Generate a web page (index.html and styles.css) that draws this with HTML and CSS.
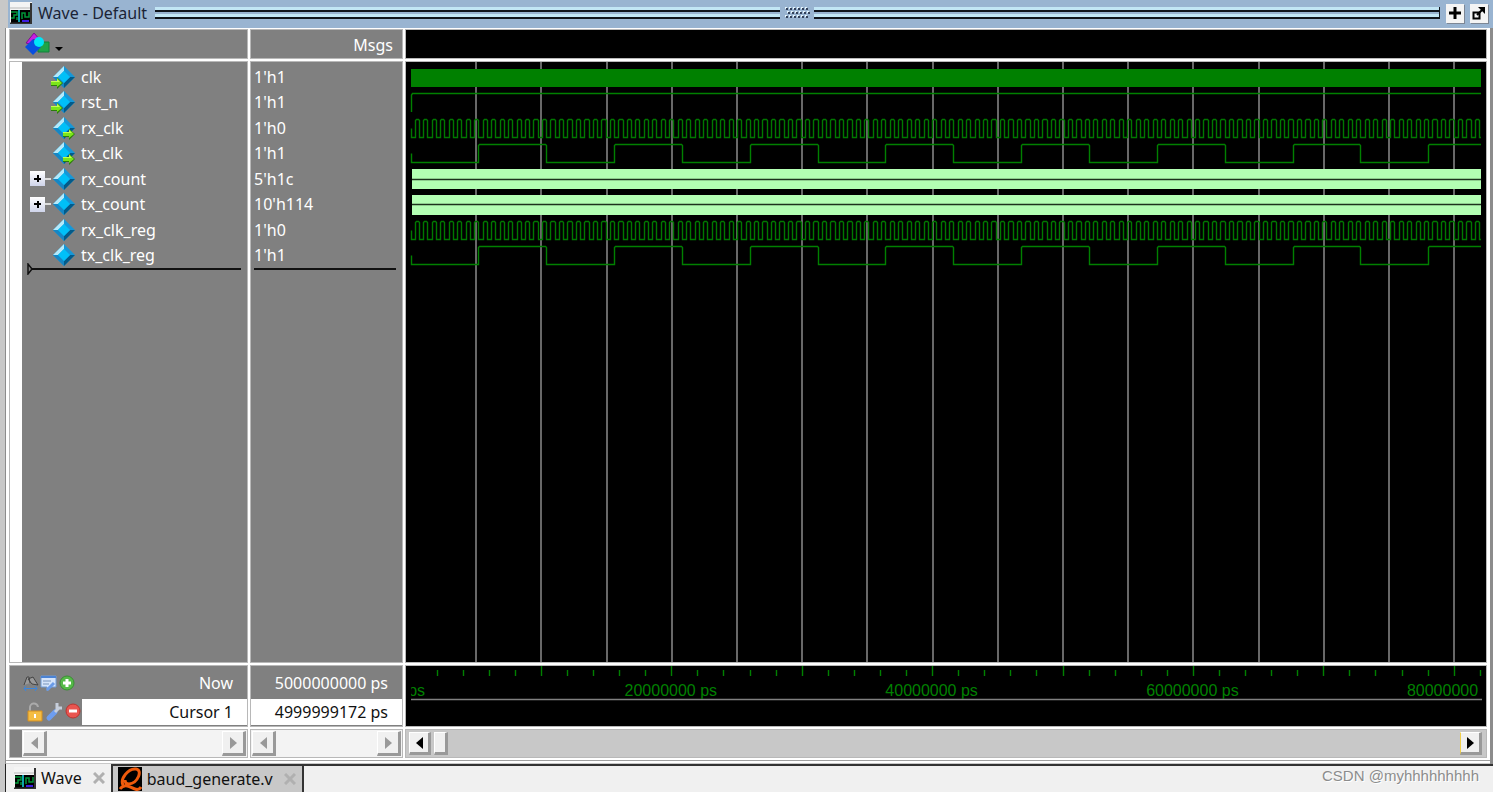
FILE: index.html
```html
<!DOCTYPE html>
<html lang="en">
<head>
<meta charset="utf-8">
<title>Wave - Default</title>
<link rel="stylesheet" href="styles.css">
</head>
<body>
<svg class="defs" aria-hidden="true">
  <defs>
    <symbol id="gem" viewBox="0 0 24 24">
      <path d="M13 1L24 12L13 23L2 12Z" fill="#1597d8"/>
      <path d="M13 1V6L7 12H2Z" fill="#b4e9fa"/>
      <path d="M2 12H7L13 18V23Z" fill="#1686c4"/>
      <path d="M13 23V18L19 12H24Z" fill="#045a88"/>
      <path d="M13 6L19 12L13 18L7 12Z" fill="#00c0f8"/>
    </symbol>
    <symbol id="arrow" viewBox="0 0 12 12">
      <path d="M0 4H6V1L12 6L6 12V9H0Z" fill="#2b7d0b"/>
      <path d="M0 4H6V1L11 6L6 10V8H0Z" fill="#7be51b"/>
      <path d="M0 4H6V2L9 5H0Z" fill="#c4ff4f"/>
    </symbol>
    <symbol id="wave" viewBox="0 0 22 22">
      <path d="M0 0H22V22H0Z" fill="#f4f4f4"/>
      <path d="M0 6H20" stroke="#b8b8b8"/>
      <path d="M1 8H20V21H1Z" fill="#000"/>
      <path d="M21 1V22M0 21.500H22" stroke="#333" stroke-width="2"/>
      <path d="M1 10H7V13H4V16H1M7 18V15M12 17V11H15V15H19V10" fill="none" stroke="#009638" stroke-width="1.500"/>
      <path d="M9 8V20" stroke="#16d8e8" stroke-width="1.500"/>
      <path d="M12 19H19" stroke="#3c1ce0" stroke-width="2"/>
    </symbol>
    <symbol id="close" viewBox="0 0 12 12">
      <path d="M1 1L11 11M11 1L1 11" stroke="#b0b0b0" stroke-width="3"/>
    </symbol>
  </defs>
</svg>
<div class="window">
  <header class="titlebar">
    <svg class="wave-icon"><use href="#wave"/></svg>
    <h1 class="title">Wave - Default</h1>
    <span class="grip"></span>
    <svg class="dots" id="dots"></svg>
    <span class="grip grip-end"></span>
    <button class="tool" aria-label="Zoom pane"><svg width="18" height="18"><path d="M9 3V15M3 9H15" stroke="#000" stroke-width="3"/></svg></button>
    <button class="tool" aria-label="Undock"><svg width="18" height="18"><path d="M3.500 8.500H9.500V14.500H3.500Z" fill="none" stroke="#000" stroke-width="2"/><path d="M7 11L13 5" stroke="#000" stroke-width="2"/><path d="M8 3H15V10Z"/></svg></button>
  </header>

  <main class="panes">
    <div class="cell head">
      <button class="filter" aria-label="Signal filter">
        <svg width="42" height="28" viewBox="0 0 42 28">
          <path d="M13 12H24V22H13Z" fill="#1fa548" stroke="#12803a"/>
          <path d="M1 13L9 3L16 11L12 14L9 9L5 14Z" fill="#c51fe0" stroke="#7b128e"/>
          <path d="M8 9L16 17L8 25L0 17Z" fill="#084fe0"/>
          <circle cx="14" cy="12" r="5" fill="#00e5f8"/>
          <path d="M30 17H38L34 21Z"/>
        </svg>
      </button>
    </div>
    <div class="cell head msgs">Msgs</div>
    <div class="cell head black"></div>

    <div class="cell names">
      <ul class="rows">
        <li><span class="stub"></span><svg class="gem"><use href="#gem"/><use href="#arrow" x="0" y="12" width="12" height="12"/></svg>clk</li>
        <li><span class="stub"></span><svg class="gem"><use href="#gem"/><use href="#arrow" x="0" y="12" width="12" height="12"/></svg>rst_n</li>
        <li><span class="stub"></span><svg class="gem"><use href="#gem"/><use href="#arrow" x="12" y="12" width="12" height="12"/></svg>rx_clk</li>
        <li><span class="stub"></span><svg class="gem"><use href="#gem"/><use href="#arrow" x="12" y="12" width="12" height="12"/></svg>tx_clk</li>
        <li><span class="stub branch"><button class="expand" aria-label="Expand rx_count"></button></span><svg class="gem"><use href="#gem"/></svg>rx_count</li>
        <li><span class="stub branch"><button class="expand" aria-label="Expand tx_count"></button></span><svg class="gem"><use href="#gem"/></svg>tx_count</li>
        <li><span class="stub"></span><svg class="gem"><use href="#gem"/></svg>rx_clk_reg</li>
        <li><span class="stub"></span><svg class="gem"><use href="#gem"/></svg>tx_clk_reg</li>
      </ul>
      <div class="insert"><svg width="6" height="12"><path d="M1 1V11L5 6Z" fill="none" stroke="#111" stroke-width="1.500"/></svg></div>
    </div>
    <div class="cell values">
      <ul class="rows">
        <li>1'h1</li><li>1'h1</li><li>1'h0</li><li>1'h1</li>
        <li>5'h1c</li><li>10'h114</li><li>1'h0</li><li>1'h1</li>
      </ul>
      <div class="insert"></div>
    </div>
    <div class="cell black plot"><svg id="plot" role="img" aria-label="Signal waveforms"></svg></div>

    <div class="cell cursors">
      <div class="line now">
        <svg width="52" height="18" viewBox="0 0 52 18">
          <path d="M1 11L4 3H6L7 9M5 5L10 3L15 11L9 10Z" fill="#999" stroke="#444"/>
          <path d="M1 14.500H14M3 12L1 14.500L3 17M12 12L14 14.500L12 17" fill="none" stroke="#3c86dc"/>
          <path d="M18 2H33V13H28L24 17V13H18Z" fill="#d5e4fa" stroke="#719bd6"/>
          <path d="M18 3H33" stroke="#4b83d4" stroke-width="2"/>
          <path d="M20 7H28M20 10H26" stroke="#7894bc"/><path d="M24 16L31 9" stroke="#6a9be8" stroke-width="3"/>
          <circle cx="44" cy="9" r="7" fill="#55ba48" stroke="#3b8d35"/>
          <path d="M44 5V13M40 9H48" stroke="#fff" stroke-width="3"/>
        </svg>
        <span class="label">Now</span>
      </div>
      <div class="line cursor">
        <svg width="60" height="24" viewBox="0 0 60 24">
          <path d="M8 11V8A4 4 0 0 1 16 7" fill="none" stroke="#ababab" stroke-width="2"/>
          <path d="M6 11H20V21H6Z" fill="#f5bd43" stroke="#d48f20"/><path d="M12 14H14V18H12Z" fill="#fff"/>
          <path d="M27 18L33 12" stroke="#6d9df0" stroke-width="5" stroke-linecap="round"/>
          <path d="M33 12L37 8M35 3V8H40" fill="none" stroke="#c6cedb" stroke-width="3"/>
          <circle cx="51" cy="11" r="7" fill="#e95550" stroke="#ba3530"/>
          <path d="M47 11H55" stroke="#fff" stroke-width="3"/>
        </svg>
        <span class="label">Cursor 1</span>
      </div>
    </div>
    <div class="cell times">
      <div class="line now"><span class="label">5000000000 ps</span></div>
      <div class="line cursor"><span class="label">4999999172 ps</span></div>
    </div>
    <div class="cell black ruler"><svg id="ruler" role="img" aria-label="Time ruler"></svg></div>

    <div class="cell scroll first"><button class="step left" aria-label="Scroll names left"></button><span class="track"></span><button class="step right" aria-label="Scroll names right"></button></div>
    <div class="cell scroll"><button class="step left" aria-label="Scroll values left"></button><span class="track"></span><button class="step right" aria-label="Scroll values right"></button></div>
    <div class="cell scroll active"><button class="step left" aria-label="Scroll waves left"></button><button class="thumb" aria-label="Scroll position"></button><span class="track"></span><button class="step right" aria-label="Scroll waves right"></button></div>
  </main>

  <footer class="tabs">
    <button class="tab current"><svg class="wave-icon"><use href="#wave"/></svg>Wave<svg class="close"><use href="#close"/></svg></button>
    <button class="tab"><svg class="logo" viewBox="0 0 24 24"><path d="M0 0H24V24H0Z"/><path d="M5 18C2 12 10 1 18 2C25 3 20 16 11 17C8 17 7 15 7 13M2 22C7 15 13 21 17 22C20 23 22 22 23 20" fill="none" stroke="#ee5a0c" stroke-width="3"/></svg>baud_generate.v<svg class="close"><use href="#close"/></svg></button>
    <span class="credit">CSDN @myhhhhhhhhh</span>
  </footer>
</div>
<script src="waves.js"></script>
</body>
</html>
```

FILE: styles.css
```css
* { box-sizing: border-box; }
body {
  margin: 0;
  font: 16px/24px "Noto Sans", "Open Sans", sans-serif;
  color: #111;
  background: #c8c8c8;
}
button { font: inherit; color: inherit; padding: 0; margin: 0; border: 0; background: none; }
svg { display: block; flex: none; }
ul { list-style: none; margin: 0; padding: 0; }
.defs { position: absolute; width: 0; height: 0; }

.window {
  min-height: 100vh;
  display: flex;
  flex-direction: column;
  padding-left: 5px;
}
.titlebar {
  height: 28px;
  display: flex;
  align-items: center;
  gap: 6px;
  padding: 0 5px 2px 5px;
  margin-left: 3px;
  background: #99b4d1;
}
.wave-icon { width: 22px; height: 22px; }
.titlebar .wave-icon { margin-left: -3px; }
.title { margin: 0 2px 0 0; font-size: 16px; font-weight: 400; white-space: nowrap; color: #1b2436; }
.grip {
  flex: 1;
  height: 12px;
  background: linear-gradient(#c2e6f5 0 3px, #10151c 3px 5px, #99b4d1 5px 7px, #c2e6f5 7px 10px, #10151c 10px 12px);
}
.grip-end { border-right: 1px solid #10151c; }
.dots { width: 30px; height: 14px; margin: 0 -4px; }
.titlebar .tool { width: 18px; height: 19px; background: #f4f4f4; box-shadow: 1px 1px 0 #7d8795; }

.panes {
  flex: 1;
  display: grid;
  grid-template: 28px 1fr 60px 27px / 237px 151px 1fr;
  gap: 4px;
  padding: 2px 4px 7px;
  background: #fff;
  border-left: 1px solid #8c8c8c;
  border-right: 3px solid #8c8c8c;
  box-shadow: inset 0 -1px 0 #c8c8c8, inset 0 -3px 0 #fff, inset 0 -4px 0 #a0a0a0;
}
.cell {
  min-width: 0;
  min-height: 0;
  background: #808080;
  color: #fff;
  box-shadow: 0 0 0 1px #b8b8b8;
}
.black { background: #000; }
.msgs { text-align: right; padding: 3px 9px 0 0; }
.filter { margin-left: 15px; display: block; }

.names { border-left: 12px solid #fff; padding-left: 5px; }
.rows { display: grid; grid-template-rows: repeat(8, 1fr); height: 204px; margin-top: 2px; }
.rows li { display: flex; align-items: center; min-height: 0; }
.stub { width: 24px; display: flex; align-items: center; padding-left: 3px; }
.branch { background: linear-gradient(#ddd, #ddd) right center / 10px 2px no-repeat; }
.expand {
  width: 15px;
  height: 15px;
  background:
    linear-gradient(#000, #000) center / 7px 2px no-repeat,
    linear-gradient(#000, #000) center / 2px 7px no-repeat,
    linear-gradient(#fff, #cfd4ea);
}
.gem { width: 24px; height: 24px; margin-right: 6px; }
.values li { padding-left: 3px; }
.insert { height: 2px; margin: 0 6px 0 3px; background: #111; display: flex; align-items: center; }
.names .insert { margin-left: 0; background: linear-gradient(#111, #111) 5px 0 no-repeat; }
.plot, .ruler { overflow: hidden; }
.plot svg, .ruler svg { width: 100%; height: 100%; }
.ruler text { fill: #008000; font: 16px "Liberation Sans", sans-serif; text-anchor: middle; }

.line { display: flex; align-items: center; padding-right: 14px; }
.label { margin-left: auto; }
.now { height: 33px; padding-left: 13px; }
.cursor { height: 26px; background: #fff; color: #111; }
.cursors .cursor { background: linear-gradient(90deg, #808080 72px, #fff 72px); padding-left: 12px; }

.scroll { display: flex; padding: 1px; background: #f3f3f3; }
.first { border-left: 12px solid #808080; }
.track { flex: 1; }
.step, .thumb {
  width: 24px;
  background: #f0f0f0;
  border: solid;
  border-width: 1px 3px 3px 1px;
  border-color: #fff #999 #999 #fff;
}
.step { display: flex; align-items: center; justify-content: center; color: #999; }
.step::before { content: ""; border: solid transparent; border-width: 6px 0; }
.left::before { border-right: 7px solid currentColor; }
.right::before { border-left: 7px solid currentColor; }
.active { padding: 2px 4px 2px 3px; background: #c8c8c8; }
.active .step { width: 22px; color: #000; }
.active .right { border-left-color: #f0cf4a; }
.thumb { width: 14px; margin-left: 3px; }

.tabs {
  height: 28px;
  display: flex;
  align-items: stretch;
  background: #f0f0f0;
  border-left: 1px solid #222;
}
.tab {
  display: flex;
  align-items: center;
  gap: 5px;
  padding: 0 6px 0 5px;
  background: #c8c8c8;
  border: solid #333;
  border-width: 2px 2px 0 2px;
}
.current { background: #f0f0f0; border-width: 0; padding: 0 6px 0 8px; }
.close { width: 12px; height: 12px; margin-left: 6px; }
.logo { width: 24px; height: 24px; }
.credit {
  flex: 1;
  border-top: 2px solid #333;
  padding-right: 14px;
  text-align: right;
  font-size: 15px;
  line-height: 20px;
  font-family: "Liberation Sans", sans-serif;
  color: #8c8c8c;
  text-shadow: 1px 1px 0 #fff;
}
```

FILE: waves.js
```js
const NS = "http://www.w3.org/2000/svg";
const LEFT = 5, STEP = 65.2, HALF = 67.85;
const GREEN = "#008000";

function add(svg, tag, attrs, text) {
  const el = document.createElementNS(NS, tag);
  for (const key in attrs) el.setAttribute(key, attrs[key]);
  if (text) el.textContent = text;
  svg.appendChild(el);
  return el;
}

function stroke(svg, d, color, width) {
  add(svg, "path", { d, fill: "none", stroke: color, "stroke-width": width || 1 });
}

const snap = v => Math.floor(v) + 0.5;

// Square wave that starts low at the left edge.
function clock(half, top, bottom, right) {
  let x = LEFT, high = false;
  let d = `M${LEFT + 0.5} ${bottom - 9}V${bottom}`;
  while (x + half < right) {
    x += half;
    const e = snap(x);
    d += high ? `H${e - 1}L${e} ${top + 1}V${bottom}` : `H${e}V${top + 1}L${e + 1} ${top}`;
    high = !high;
  }
  return d + `H${right}`;
}

function drawPlot() {
  const svg = document.getElementById("plot");
  svg.replaceChildren();
  const w = svg.clientWidth, h = svg.clientHeight, right = w - 5;
  for (let x = LEFT + STEP; x < w; x += STEP) add(svg, "rect", { x: Math.round(x) - 1, y: 0, width: 2, height: h, fill: "#686868" });
  add(svg, "rect", { x: LEFT, y: 7, width: right - LEFT, height: 18, fill: GREEN });
  stroke(svg, `M${LEFT + 0.5} 50V33L${LEFT + 1.5} 31.5H${right}`, GREEN, 1.4);
  for (const y of [0, 102]) {
    stroke(svg, clock(HALF / 16, 57.5 + y, 75.5 + y, right), "#007800", 1.4);
    stroke(svg, clock(HALF, 82.5 + y, 100.5 + y, right), GREEN, 1.4);
  }
  for (const y of [107, 133]) add(svg, "rect", { x: LEFT + 1, y, width: right - LEFT - 1, height: 20, fill: "#b3ffb3" });
  for (const y of [117.5, 142.5]) stroke(svg, `M${LEFT + 1} ${y}H${right}`, "#1c331c", 1.5);
}

function drawRuler() {
  const svg = document.getElementById("ruler");
  svg.replaceChildren();
  const w = svg.clientWidth, right = w - 4;
  const minor = STEP * 2 / 5;
  for (let i = 1; LEFT + i * minor < right; i++) {
    const x = snap(LEFT + i * minor);
    stroke(svg, `M${x} ${i % 5 ? 4 : 0}V10`, GREEN, 1.4);
  }
  stroke(svg, `M${LEFT} 33.5H${right}`, "#808080", 1.4);
  const clip = add(svg, "clipPath", { id: "range" });
  add(clip, "rect", { x: LEFT, y: 0, width: right - LEFT, height: 59 });
  const labels = add(svg, "g", { "clip-path": "url(#range)" });
  for (let i = 0; LEFT + i * STEP * 4 < w; i++) {
    add(labels, "text", { x: LEFT + i * STEP * 4 - 1, y: 30 }, (i ? i * 20000000 : 0) + " ps");
  }
}

function drawDots() {
  const svg = document.getElementById("dots");
  for (let r = 0; r < 3; r++) {
    for (let c = 0; c < 6; c++) {
      const x = c * 4 + 3 + (r === 1 ? 2 : 0), y = r * 4 + 1;
      add(svg, "rect", { x, y, width: 2, height: 2, fill: "#e4f4fc" });
      add(svg, "rect", { x: x + 1, y: y + 1, width: 2, height: 2, fill: "#33415a" });
    }
  }
}

function draw() { drawPlot(); drawRuler(); }
drawDots();
draw();
window.addEventListener("resize", draw);
```
